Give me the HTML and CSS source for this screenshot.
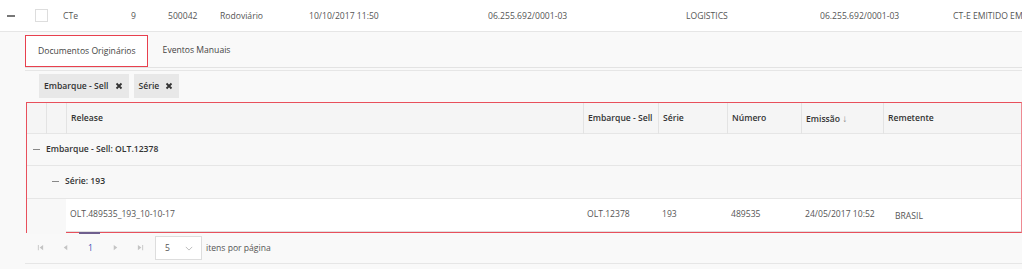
FILE: index.html
```html
<!DOCTYPE html>
<html lang="pt-BR">
<head>
    <meta charset="UTF-8">
    <title>Documentos</title>
    <link rel="stylesheet" href="styles.css">
</head>
<body>
    <div class="page">
        <div class="master-row">
            <div class="cell c-exp"><span class="minus"></span></div>
            <div class="cell c-chk"><span class="checkbox"></span></div>
            <div class="cell w68">CTe</div>
            <div class="cell w37">9</div>
            <div class="cell w52">500042</div>
            <div class="cell w89">Rodoviário</div>
            <div class="cell w179">10/10/2017 11:50</div>
            <div class="cell w198">06.255.692/0001-03</div>
            <div class="cell w134">LOGISTICS</div>
            <div class="cell w133">06.255.692/0001-03</div>
            <div class="cell c-rest">CT-E EMITIDO EM PROCESSAMENTO</div>
        </div>

        <div class="detail">
            <div class="tabs">
                <div class="tab active">Documentos Originários</div>
                <div class="tab">Eventos Manuais</div>
            </div>

            <div class="panel">
                <div class="group-panel">
                    <span class="chip">Embarque - Sell <svg class="x" viewBox="0 0 8 8"><path d="M1.5 1.5 6.5 6.5M6.5 1.5 1.5 6.5"/></svg></span>
                    <span class="chip">Série <svg class="x" viewBox="0 0 8 8"><path d="M1.5 1.5 6.5 6.5M6.5 1.5 1.5 6.5"/></svg></span>
                </div>

                <div class="grid">
                    <div class="row head">
                        <div></div>
                        <div class="th"></div>
                        <div class="th">Release</div>
                        <div class="th">Embarque - Sell</div>
                        <div class="th">Série</div>
                        <div class="th">Número</div>
                        <div class="th">Emissão <span class="arrow">&#8595;</span></div>
                        <div class="th">Remetente</div>
                    </div>
                    <div class="row group">
                        <div class="g-title lvl1"><span class="minus"></span>Embarque - Sell: OLT.12378</div>
                    </div>
                    <div class="row group tall">
                        <div class="g-pad"></div>
                        <div class="g-title lvl2"><span class="minus"></span>Série: 193</div>
                    </div>
                    <div class="row data">
                        <div class="g-pad"></div>
                        <div class="g-pad"></div>
                        <div class="td">OLT.489535_193_10-10-17</div>
                        <div class="td">OLT.12378</div>
                        <div class="td">193</div>
                        <div class="td">489535</div>
                        <div class="td">24/05/2017 10:52</div>
                        <div class="td low">BRASIL</div>
                    </div>
                </div>

                <div class="pager">
                    <span class="focus-bar"></span>
                    <span class="p-btn"><svg viewBox="0 0 8 8"><path d="M1 1h1v6H1zM7 1v6L3 4z"/></svg></span>
                    <span class="p-btn"><svg viewBox="0 0 8 8"><path d="M6 1v6L2 4z"/></svg></span>
                    <span class="p-btn current">1</span>
                    <span class="p-btn"><svg viewBox="0 0 8 8"><path d="M2 1v6l4-3z"/></svg></span>
                    <span class="p-btn"><svg viewBox="0 0 8 8"><path d="M1 1v6l4-3zM6 1h1v6H6z"/></svg></span>
                    <span class="page-size">5 <svg class="chev" viewBox="0 0 10 6"><path d="M1 1l4 4 4-4"/></svg></span>
                    <span class="p-label">itens por página</span>
                </div>
            </div>
        </div>
    </div>
</body>
</html>
```

FILE: styles.css
```css
body {
    margin: 0;
    background: #fff;
    font-family: "Open Sans", "Noto Sans", Arial, sans-serif;
    font-size: 8.6px;
    color: #555;
}
.page {
    width: 1022px;
}

/* master row */
.master-row {
    display: flex;
    align-items: center;
    height: 31px;
    border-bottom: 1px solid #e6e6e6;
    background: #fff;
}
.cell {
    white-space: nowrap;
    overflow: hidden;
}
.c-exp { width: 35px; padding-left: 7px; box-sizing: border-box; }
.c-chk { width: 28px; }
.w68 { width: 68px; }
.w37 { width: 37px; }
.w52 { width: 52px; }
.w89 { width: 89px; }
.w179 { width: 179px; }
.w198 { width: 198px; }
.w134 { width: 134px; }
.w133 { width: 133px; }
.c-rest { flex: 1; }
.minus {
    display: inline-block;
    width: 7px;
    height: 1.5px;
    background: #777;
    vertical-align: middle;
}
.c-exp .minus { width: 8px; }
.checkbox {
    display: block;
    width: 11px;
    height: 11px;
    border: 1px solid #ddd;
    background: #fff;
}

/* detail */
.detail {
    background: #f9f9f9;
    padding: 3px 0 6px 25px;
}
.tabs {
    display: flex;
    align-items: flex-start;
    height: 32px;
    border-bottom: 1px solid #e3e3e3;
}
.tab {
    height: 31px;
    line-height: 31px;
    padding: 0 15px;
    color: #444;
}
.tab.active {
    background: #fff;
    border: 1px solid #e8404e;
    padding: 0 11px 0 12px;
    height: 30px;
    line-height: 30px;
}
.panel {
    margin-top: 2px;
    border-top: 1px solid #e6e6e6;
}
.group-panel {
    display: flex;
    gap: 5px;
    padding: 3px 0 4px 14px;
}
.chip {
    display: inline-flex;
    align-items: center;
    height: 24px;
    padding: 0 6px 0 5px;
    background: #e8e8e8;
    color: #333;
    font-weight: 600;
}
.chip .x {
    width: 8px;
    height: 8px;
    margin-left: 6px;
    stroke: #333;
    stroke-width: 1.8;
}

/* grid */
.grid {
    margin-left: 1px;
    border: 1px solid #e8505c;
    border-right-color: #ee8a92;
}
.row {
    display: grid;
    grid-template-columns: 19px 20px 517px 75px 69px 74px 82px 1fr;
    border-bottom: 1px solid #e6e6e6;
}
.head {
    height: 30px;
    background: #f5f5f5;
    color: #333;
    font-weight: 600;
}
.th {
    border-left: 1px solid #e3e3e3;
    padding-left: 4px;
    line-height: 30px;
    white-space: nowrap;
}
.arrow {
    font-weight: 400;
    font-size: 10px;
    color: #888;
}
.group {
    height: 31px;
    background: #f8f8f8;
    color: #333;
    font-weight: 600;
}
.group.tall { height: 32px; }
.g-title {
    grid-column: 1 / -1;
    line-height: 31px;
}
.g-title .minus {
    margin-right: 6px;
    background: #888;
}
.lvl1 { padding-left: 6px; }
.lvl2 { grid-column: 2 / -1; padding-left: 6px; }
.g-pad { background: #f8f8f8; }
.data {
    height: 32px;
    background: #fff;
    border-bottom-color: #e0e0e0;
}
.td {
    padding-left: 4px;
    line-height: 31px;
    white-space: nowrap;
}
.td.low {
    padding-left: 12px;
    line-height: 35px;
}

/* pager */
.pager {
    position: relative;
    display: flex;
    align-items: center;
    height: 30px;
    padding-left: 3px;
    border-bottom: 1px solid #e6e6e6;
}
.focus-bar {
    position: absolute;
    left: 54px;
    top: -1px;
    width: 21px;
    height: 2px;
    background: #6f5f8e;
}
.p-btn {
    width: 25px;
    text-align: center;
    color: #3f51b5;
}
.p-btn svg {
    width: 7px;
    height: 7px;
    fill: #c4c4c4;
}
.page-size {
    display: inline-flex;
    align-items: center;
    justify-content: space-between;
    width: 47px;
    height: 24px;
    box-sizing: border-box;
    padding: 0 8px 0 9px;
    margin-left: 2px;
    background: #fff;
    border: 1px solid #ddd;
}
.chev {
    width: 8px;
    height: 5px;
    fill: none;
    stroke: #bbb;
    stroke-width: 1.2;
}
.p-label {
    margin-left: 4px;
}
```
